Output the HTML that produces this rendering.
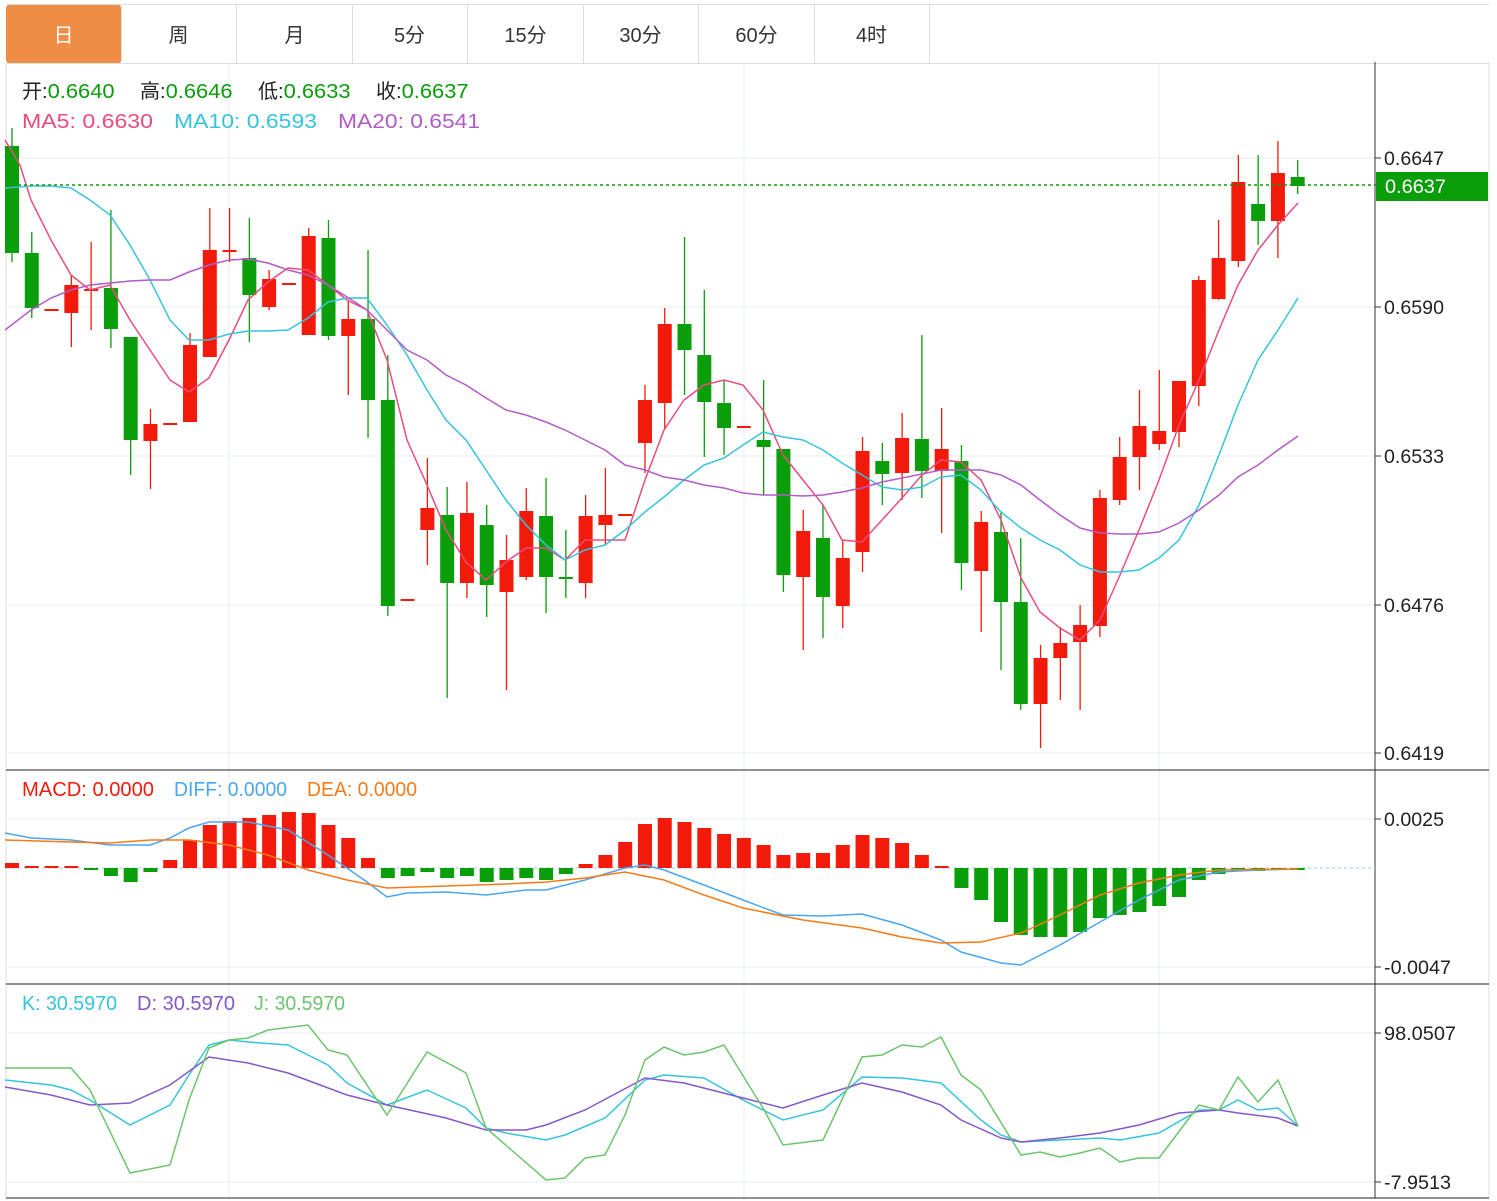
<!DOCTYPE html>
<html><head><meta charset="utf-8"><style>
body{margin:0;background:#fff;width:1497px;height:1201px;overflow:hidden;font-family:"Liberation Sans","Noto Sans CJK SC",sans-serif}
.tabs{position:absolute;left:6px;top:4px;height:58px;width:1483px;border-top:1px solid #ddd;border-bottom:1px solid #ddd;}
.tab{position:absolute;top:0;height:58px;width:115px;border-right:1px solid #ddd;text-align:center;line-height:62px;font-size:20px;color:#333}
.tab.on{background:#f08d44;color:#fff;border-radius:3px}
svg{position:absolute;left:0;top:0}
</style></head><body>
<div class="tabs">
<div class="tab on" style="left:0">日</div>
<div class="tab" style="left:115px">周</div>
<div class="tab" style="left:231px">月</div>
<div class="tab" style="left:346px">5分</div>
<div class="tab" style="left:462px">15分</div>
<div class="tab" style="left:577px">30分</div>
<div class="tab" style="left:693px">60分</div>
<div class="tab" style="left:808px">4时</div>
</div>
<svg id="s" width="1497" height="1201" xmlns="http://www.w3.org/2000/svg" font-family="Liberation Sans, Noto Sans CJK SC, sans-serif"></svg>
<script>
var o='';
function L(x1,y1,x2,y2,c,w,d){o+='<line x1="'+x1+'" y1="'+y1+'" x2="'+x2+'" y2="'+y2+'" stroke="'+c+'" stroke-width="'+(w||1)+'"'+(d?' stroke-dasharray="'+d+'"':'')+'/>';}
function T(x,y,t,c,s,len){o+='<text x="'+x+'" y="'+y+'" fill="'+c+'" font-size="'+(s||20)+'"'+(len?' textLength="'+len+'" lengthAdjust="spacingAndGlyphs"':'')+'>'+t+'</text>';}
function P(a,c,w){o+='<polyline fill="none" stroke="'+c+'" stroke-width="'+(w||1.5)+'" points="'+a.join(' ')+'"/>';}
var G='#e5edf3';
L(6,62,6,1198,'#ddd');L(1489,62,1489,1198,'#ddd');
[229,744,1159].forEach(function(x){L(x,62,x,1198,G)});
[158,307,456,605,753,819,967,1033,1182].forEach(function(y){L(6,y,1375,y,G)});
L(1375,62,1375,1198,'#333');
L(6,770,1489,770,'#222');L(6,984,1489,984,'#222');L(6,1198,1489,1198,'#222');
[[158,'0.6647',60],[307,'0.6590',60],[456,'0.6533',60],[605,'0.6476',60],[753,'0.6419',60],[819,'0.0025',60],[967,'-0.0047',67],[1033,'98.0507',72],[1182,'-7.9513',67]].forEach(function(a){L(1375,a[0],1381,a[0],'#333');T(1384,a[0]+7,a[1],'#222',19,a[2])});
var C=[[1,146,253,128,262],[1,253,308,232,318],[0,309,311,309,311],[0,285,313,275,347],[0,289,291,242,330],[1,288,329,210,348],[1,337,440,337,475],[0,424,441,409,489],[0,423,425,423,425],[0,345,422,333,422],[0,250,357,208,357],[0,250,252,208,262],[1,258,295,218,342],[0,279,307,270,310],[0,283,285,283,285],[0,236,335,228,335],[1,238,336,220,340],[0,319,336,300,395],[1,319,400,250,438],[1,400,606,355,616],[0,599,601,599,601],[0,508,530,458,565],[1,515,583,487,698],[0,513,583,482,598],[1,525,585,505,617],[0,560,592,535,690],[0,511,577,488,580],[1,516,577,478,613],[1,577,579,530,598],[0,516,583,495,598],[0,515,525,468,545],[0,514,516,514,516],[0,400,443,385,473],[0,324,403,308,430],[1,324,350,237,395],[1,355,402,290,457],[1,403,428,380,455],[0,426,428,426,428],[1,440,447,380,495],[1,449,575,449,592],[0,531,577,510,650],[1,538,597,505,638],[0,558,606,540,628],[0,451,552,437,572],[1,461,474,443,505],[0,438,473,413,500],[1,439,471,335,498],[0,449,471,408,533],[1,461,563,445,590],[0,522,571,511,632],[1,532,602,512,670],[1,602,704,538,710],[0,658,704,645,748],[0,643,658,627,700],[0,625,642,605,710],[0,498,626,490,637],[0,457,500,437,505],[0,426,457,390,490],[0,431,444,370,450],[0,381,432,381,447],[0,280,386,276,406],[0,258,299,220,300],[0,182,261,155,267],[1,204,221,155,245],[0,173,221,141,258],[1,177,186,160,194]];
function X(i){return 12+i*19.78}
C.forEach(function(c,i){var x=X(i),col=c[0]?'#0a9e0a':'#f21a0a';L(x,c[3],x,c[4],col,1.3);o+='<rect x="'+(x-7)+'" y="'+c[1]+'" width="14" height="'+Math.max(2,c[2]-c[1])+'" fill="'+col+'"/>';});
P(['5,140','20,165','31,200','51,240','71,275','90,290','110,285','130,320','150,350','170,380','189,392','209,378','229,340','248,300','268,282','288,268','308,270','328,285','347,300','367,310','387,360','407,440','427,485','446,530','466,562','486,580','506,562','526,548','546,548','565,560','585,540','605,540','625,540','645,480','664,430','684,400','704,385','724,380','743,385','763,410','783,455','803,480','823,505','842,540','862,542','882,520','902,498','922,475','941,460','961,462','981,480','1001,520','1021,578','1040,612','1060,628','1080,640','1100,620','1120,575','1139,530','1159,480','1179,425','1199,380','1219,330','1238,285','1258,250','1278,225','1298,203'],'#ea4c7e');
P(['5,188','31,186','51,186','71,188','90,200','110,215','130,245','150,280','170,320','189,340','209,340','229,334','248,331','268,331','288,330','308,318','328,302','347,298','367,298','387,325','407,355','427,390','446,420','466,440','486,470','506,500','526,525','546,545','565,560','585,550','605,545','625,530','645,512','664,497','684,480','704,465','724,458','743,445','763,432','783,437','803,440','823,450','842,463','862,475','882,487','902,490','922,487','941,477','961,475','981,490','1001,512','1021,528','1040,540','1060,550','1080,565','1100,572','1120,572','1139,570','1159,558','1179,540','1199,505','1219,455','1238,405','1258,360','1278,330','1298,298'],'#35c4dc');
P(['5,330','31,310','51,298','71,290','90,285','110,283','130,281','150,280','170,280','189,272','209,265','229,260','248,259','268,263','288,270','308,275','328,285','347,297','367,310','387,330','407,350','427,360','446,375','466,385','486,398','506,410','526,415','546,422','565,430','585,440','605,450','625,465','645,470','664,477','684,480','704,485','724,488','743,493','763,495','783,495','803,496','823,495','842,492','862,488','882,482','902,478','922,474','941,470','961,470','981,470','1001,475','1021,485','1040,500','1060,515','1080,528','1100,533','1120,534','1139,534','1159,532','1179,523','1199,510','1219,495','1238,477','1258,465','1278,450','1298,436'],'#b25cc7');
L(6,185,1375,185,'#0a9e0a',1.5,'3,3');L(1375,185,1381,185,'#333');
o+='<rect x="1376" y="172" width="112" height="29" fill="#0a9e0a"/>';T(1385,193,'0.6637','#fff',19,61);
var Z=868,M=[863,866,866,866,869,876,882,872,860,840,825,821,818,815,812,813,825,838,858,878,876,872,878,876,882,880,878,880,874,864,855,842,824,818,822,828,834,838,845,855,853,853,845,835,838,843,855,866,888,900,922,935,937,937,932,918,915,912,906,897,880,874,871,871,869,869];
L(6,Z,1375,Z,'#9cc8ec',1,'3,3');
M.forEach(function(v,i){var x=X(i),up=v<Z,col=up?'#f21a0a':'#0a9e0a';var y=Math.min(v,Z),h=Math.max(2,Math.abs(Z-v));o+='<rect x="'+(x-7)+'" y="'+y+'" width="14" height="'+h+'" fill="'+col+'"/>';});
P(['5,833','31,838','71,840','110,845','150,845','170,838','189,828','209,822','248,822','288,830','328,855','367,882','387,897','407,893','446,892','486,895','526,890','546,890','585,880','625,868','645,865','664,870','704,885','743,900','783,915','823,916','862,914','902,925','941,940','961,952','1001,963','1021,965','1060,945','1100,922','1139,900','1179,880','1219,872','1258,870','1298,869'],'#4aa6f0');
P(['5,840','71,842','110,843','150,840','189,840','229,845','268,855','308,870','347,880','387,888','446,886','506,884','546,882','585,878','625,872','664,880','704,895','743,908','803,920','862,928','902,937','941,943','981,942','1021,933','1060,915','1100,895','1139,883','1179,875','1219,870','1298,869'],'#f57b19');
P(['5,1080','51,1085','71,1090','90,1100','130,1125','170,1105','189,1075','209,1045','229,1040','248,1042','288,1045','328,1065','347,1083','387,1105','427,1090','466,1108','486,1128','506,1133','546,1140','565,1135','605,1118','645,1080','664,1075','704,1078','743,1100','783,1120','823,1110','862,1077','902,1078','941,1083','981,1120','1001,1135','1021,1142','1060,1140','1100,1138','1120,1140','1159,1133','1199,1110','1219,1110','1238,1100','1258,1110','1278,1108','1298,1126'],'#35c4dc');
P(['5,1087','51,1095','90,1105','130,1103','170,1085','209,1057','248,1063','288,1073','347,1095','387,1105','446,1118','486,1130','526,1130','546,1125','585,1110','645,1078','684,1083','743,1098','783,1108','823,1095','862,1083','902,1092','941,1105','961,1120','1001,1138','1021,1142','1060,1138','1100,1133','1139,1125','1179,1113','1219,1110','1238,1113','1278,1118','1298,1126'],'#8458c8');
P(['5,1068','71,1068','90,1090','130,1173','170,1165','189,1100','209,1048','229,1040','248,1038','268,1030','308,1025','328,1050','347,1055','387,1115','427,1052','466,1073','486,1128','546,1180','565,1178','585,1158','605,1155','625,1115','645,1060','664,1047','684,1055','704,1052','724,1045','763,1108','783,1145','823,1140','862,1057','882,1055','902,1045','922,1047','941,1037','961,1075','981,1090','1021,1155','1040,1152','1060,1157','1080,1153','1100,1148','1120,1162','1139,1158','1159,1158','1199,1105','1219,1110','1238,1077','1258,1102','1278,1080','1298,1126'],'#6cc46c');
function OH(x,lab,val){o+='<text x="'+x+'" y="98" font-size="20"><tspan fill="#222">'+lab+':</tspan><tspan fill="#0a9e0a" textLength="67" lengthAdjust="spacingAndGlyphs">'+val+'</tspan></text>';}
OH(22,'开','0.6640');OH(140,'高','0.6646');OH(258,'低','0.6633');OH(376,'收','0.6637');
T(22,128,'MA5: 0.6630','#ea4c7e',20,131);T(174,128,'MA10: 0.6593','#35c4dc',20,143);T(338,128,'MA20: 0.6541','#b25cc7',20,142);
T(22,796,'MACD: 0.0000','#f21a0a',20,132);T(174,796,'DIFF: 0.0000','#4aa6f0',20,113);T(307,796,'DEA: 0.0000','#f57b19',20,110);
T(22,1010,'K: 30.5970','#35c4dc',20,95);T(137,1010,'D: 30.5970','#8458c8',20,98);T(254,1010,'J: 30.5970','#6cc46c',20,91);
document.getElementById('s').innerHTML=o;
</script>
</body></html>
